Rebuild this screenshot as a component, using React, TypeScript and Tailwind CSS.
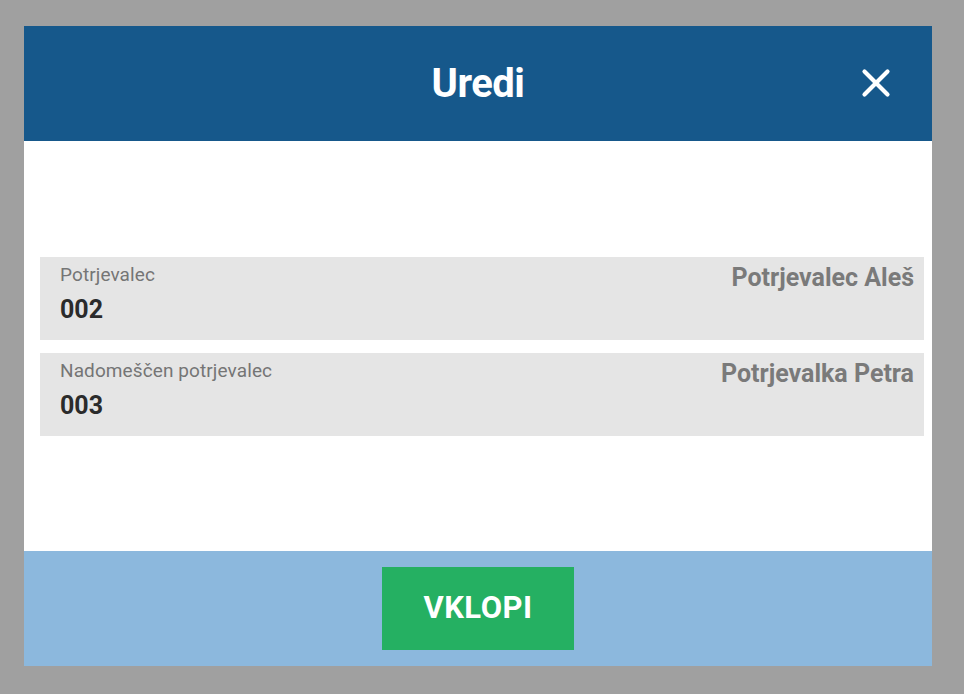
import { X } from "lucide-react";

type Row = {
  label: string;
  code: string;
  name: string;
};

const rows: Row[] = [
  { label: "Potrjevalec", code: "002", name: "Potrjevalec Aleš" },
  { label: "Nadomeščen potrjevalec", code: "003", name: "Potrjevalka Petra" },
];

export default function App() {
  return (
    <div className="w-[964px] h-[694px] bg-[#a0a0a0] pt-[26px] px-6 font-['Roboto',sans-serif]">
      <div className="w-[908px] h-[640px] flex flex-col bg-white">
        {/* Header */}
        <div className="h-[115px] bg-[#16588b] relative flex items-center justify-center">
          <h1 className="text-white font-bold text-[40px] leading-none tracking-[-0.5px]">
            Uredi
          </h1>
          <button className="absolute right-[33px] top-[34px] text-white">
            <X size={46} strokeWidth={2.2} />
          </button>
        </div>

        {/* Body */}
        <div className="flex-1 flex flex-col justify-center gap-[13px] pl-4 pr-2">
          {rows.map((r) => (
            <div
              key={r.code}
              className="h-[83px] bg-[#e5e5e5] flex justify-between pl-5 pr-[10px] pt-[7px]"
            >
              <div className="flex flex-col">
                <span className="text-[19px] leading-[22px] text-[#757575] tracking-[0.1px]">
                  {r.label}
                </span>
                <span className="mt-[10px] text-[25px] leading-7 font-bold text-[#2b2b2b]">
                  {r.code}
                </span>
              </div>
              <span className="text-[25px] leading-7 font-bold text-[#7a7a7a]">{r.name}</span>
            </div>
          ))}
        </div>

        {/* Footer */}
        <div className="h-[115px] bg-[#8cb8dd] flex items-center justify-center">
          <button className="w-[192px] h-[83px] bg-[#25b062] text-white font-bold text-[31px] tracking-[0.5px]">
            VKLOPI
          </button>
        </div>
      </div>
    </div>
  );
}
